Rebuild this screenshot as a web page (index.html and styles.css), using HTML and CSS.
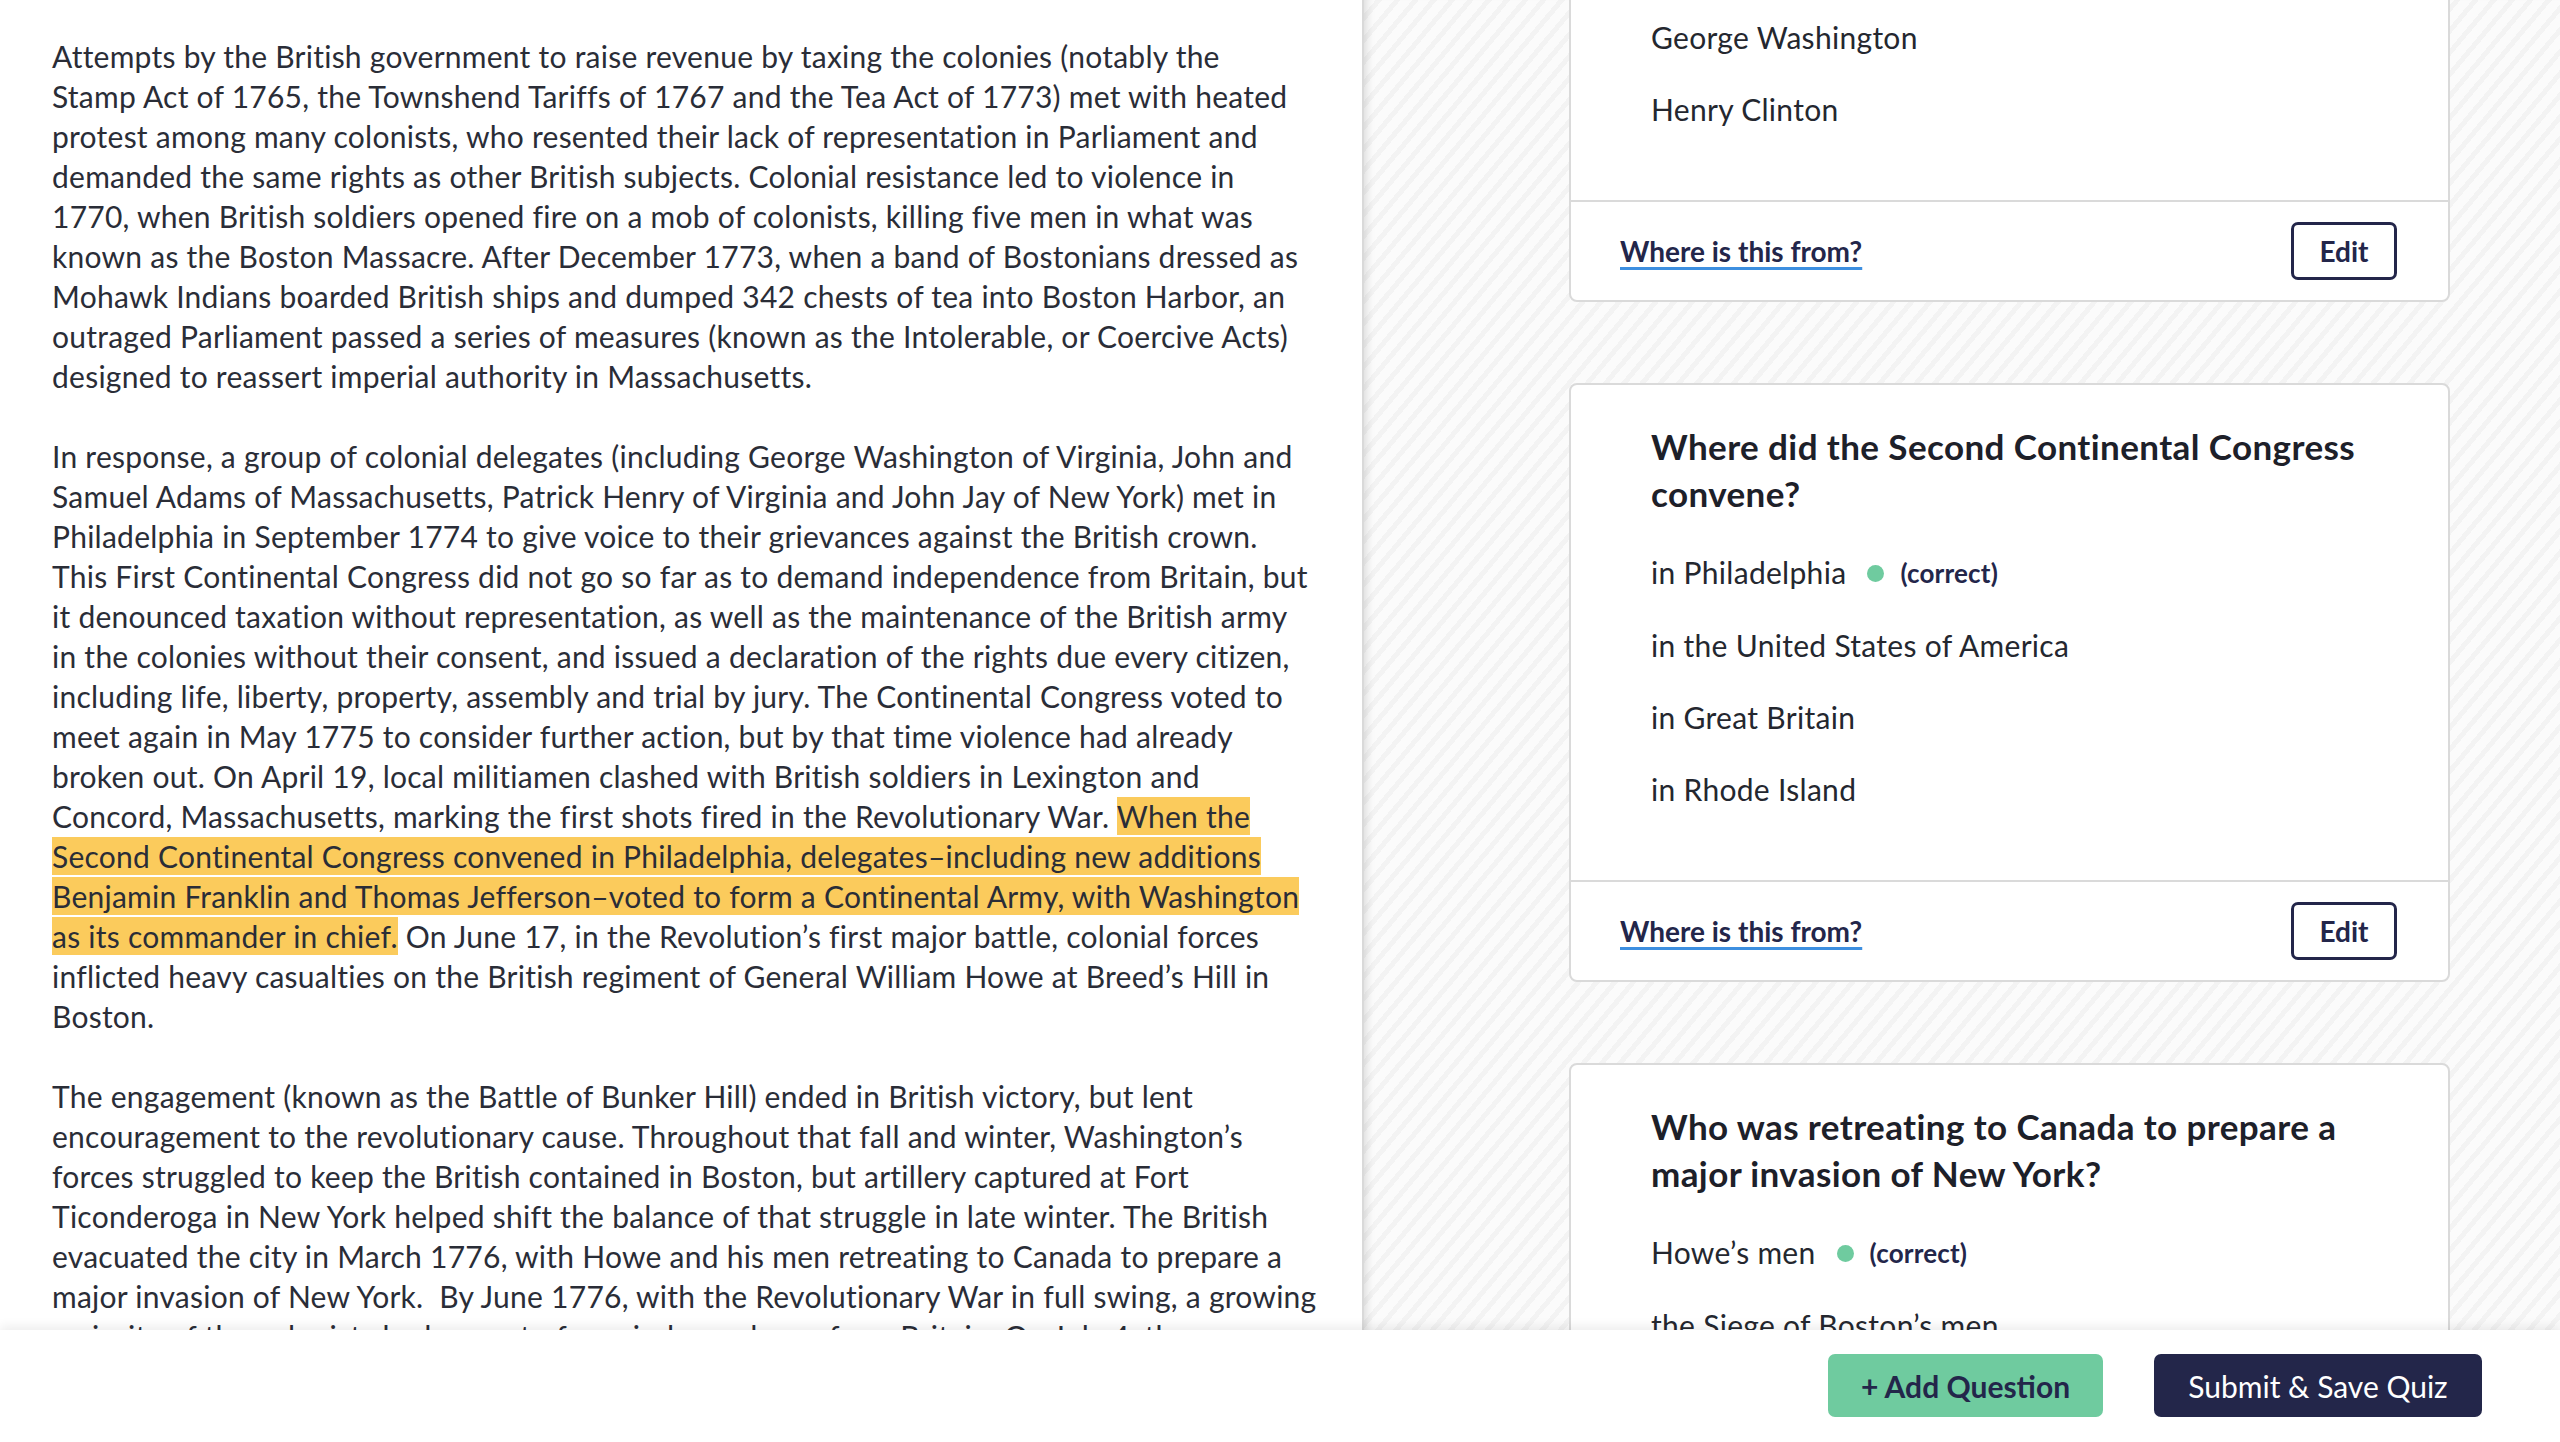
FILE: index.html
```html
<!DOCTYPE html>
<html lang="en">
<head>
<meta charset="utf-8">
<title>Quiz editor</title>
<link rel="stylesheet" href="styles.css">
</head>
<body>
<div class="app">
  <main class="workspace">
    <section class="reading">
      <p class="para">Attempts by the British government to raise revenue by taxing the colonies (notably the<br>Stamp Act of 1765, the Townshend Tariffs of 1767 and the Tea Act of 1773) met with heated<br>protest among many colonists, who resented their lack of representation in Parliament and<br>demanded the same rights as other British subjects. Colonial resistance led to violence in<br>1770, when British soldiers opened fire on a mob of colonists, killing five men in what was<br>known as the Boston Massacre. After December 1773, when a band of Bostonians dressed as<br>Mohawk Indians boarded British ships and dumped 342 chests of tea into Boston Harbor, an<br>outraged Parliament passed a series of measures (known as the Intolerable, or Coercive Acts)<br>designed to reassert imperial authority in Massachusetts.</p>
      <p class="para">In response, a group of colonial delegates (including George Washington of Virginia, John and<br>Samuel Adams of Massachusetts, Patrick Henry of Virginia and John Jay of New York) met in<br>Philadelphia in September 1774 to give voice to their grievances against the British crown.<br>This First Continental Congress did not go so far as to demand independence from Britain, but<br>it denounced taxation without representation, as well as the maintenance of the British army<br>in the colonies without their consent, and issued a declaration of the rights due every citizen,<br>including life, liberty, property, assembly and trial by jury. The Continental Congress voted to<br>meet again in May 1775 to consider further action, but by that time violence had already<br>broken out. On April 19, local militiamen clashed with British soldiers in Lexington and<br>Concord, Massachusetts, marking the first shots fired in the Revolutionary War. <mark class="hl">When the</mark><br><mark class="hl">Second Continental Congress convened in Philadelphia, delegates–including new additions</mark><br><mark class="hl">Benjamin Franklin and Thomas Jefferson–voted to form a Continental Army, with Washington</mark><br><mark class="hl">as its commander in chief.</mark> On June 17, in the Revolution’s first major battle, colonial forces<br>inflicted heavy casualties on the British regiment of General William Howe at Breed’s Hill in<br>Boston.</p>
      <p class="para">The engagement (known as the Battle of Bunker Hill) ended in British victory, but lent<br>encouragement to the revolutionary cause. Throughout that fall and winter, Washington’s<br>forces struggled to keep the British contained in Boston, but artillery captured at Fort<br>Ticonderoga in New York helped shift the balance of that struggle in late winter. The British<br>evacuated the city in March 1776, with Howe and his men retreating to Canada to prepare a<br>major invasion of New York.&nbsp; By June 1776, with the Revolutionary War in full swing, a growing<br>majority of the colonists had come to favor independence from Britain. On July 4, the</p>
    </section>

    <section class="quiz">
      <article class="card card-scrolled">
        <div class="card-body">
          <ul class="answers">
            <li class="answer">George Washington</li>
            <li class="answer">Henry Clinton</li>
          </ul>
        </div>
        <div class="card-footer">
          <a class="source-link" href="#">Where is this from?</a>
          <button class="edit-btn" type="button">Edit</button>
        </div>
      </article>

      <article class="card">
        <div class="card-body">
          <h2 class="q-title">Where did the Second Continental Congress<br>convene?</h2>
          <ul class="answers">
            <li class="answer">in Philadelphia<span class="dot"></span><span class="correct">(correct)</span></li>
            <li class="answer">in the United States of America</li>
            <li class="answer">in Great Britain</li>
            <li class="answer">in Rhode Island</li>
          </ul>
        </div>
        <div class="card-footer">
          <a class="source-link" href="#">Where is this from?</a>
          <button class="edit-btn" type="button">Edit</button>
        </div>
      </article>

      <article class="card">
        <div class="card-body">
          <h2 class="q-title">Who was retreating to Canada to prepare a<br>major invasion of New York?</h2>
          <ul class="answers">
            <li class="answer">Howe’s men<span class="dot"></span><span class="correct">(correct)</span></li>
            <li class="answer">the Siege of Boston’s men</li>
          </ul>
        </div>
      </article>
    </section>
  </main>

  <footer class="actions">
    <button class="btn btn-add" type="button">+ Add Question</button>
    <button class="btn btn-submit" type="button">Submit &amp; Save Quiz</button>
  </footer>
</div>
</body>
</html>
```

FILE: styles.css
```css
* { box-sizing: border-box; }

html, body {
  margin: 0;
  padding: 0;
  background: #ffffff;
}

body {
  font-family: "Lato", "Liberation Sans", sans-serif;
  color: #2b2e38;
}

.app {
  height: 1442px;
  display: grid;
  grid-template-rows: 1330px 112px;
  overflow: hidden;
}

.workspace {
  display: grid;
  grid-template-columns: 1364px 1fr;
  overflow: hidden;
  min-height: 0;
}

/* ---------- reading passage ---------- */
.reading {
  border-right: 2px solid #d9d9d9;
  padding: 36px 20px 0 52px;
  overflow: hidden;
  font-size: 30px;
  letter-spacing: 0.25px;
  line-height: 40px;
  color: #2a2d37;
}

.para {
  margin: 0 0 40px;
  white-space: nowrap;
}

.hl {
  background: #fbcb5c;
  color: inherit;
  padding: 1px 0;
}

/* ---------- quiz column ---------- */
.quiz {
  overflow: hidden;
  min-height: 0;
  padding-left: 205px;
  display: flex;
  flex-direction: column;
  gap: 81px;
  background-color: #fbfbfb;
  background-image: repeating-linear-gradient(130deg, #fbfbfb 0 9px, #f3f3f3 9px 14px);
  box-shadow: inset 10px 0 10px -8px rgba(0, 0, 0, 0.14);
}

.card {
  flex-shrink: 0;
  width: 881px;
  background: #ffffff;
  border: 2px solid #dadada;
  border-radius: 8px;
}

.card-scrolled {
  margin-top: -23px;
}

.card-body {
  padding: 38px 80px 71px 80px;
}

.q-title {
  margin: 0 0 33px;
  font-size: 35px;
  letter-spacing: 0.4px;
  line-height: 47px;
  font-weight: 700;
  color: #1d2029;
}

.answers {
  list-style: none;
  margin: 0;
  padding: 0;
  display: flex;
  flex-direction: column;
  gap: 32px;
}

.answer {
  font-size: 30px;
  letter-spacing: 0.3px;
  line-height: 40px;
  color: #24272f;
  display: flex;
  align-items: center;
}

.dot {
  flex-shrink: 0;
  width: 17px;
  height: 17px;
  border-radius: 50%;
  background: #6fcb9f;
  margin: 3px 16px 0 21px;
}

.correct {
  font-size: 26px;
  letter-spacing: 0.2px;
  font-weight: 700;
  color: #23264a;
  margin-top: 3px;
}

.card-footer {
  border-top: 2px solid #dadada;
  padding: 20px 51px 20px 49px;
  display: flex;
  justify-content: space-between;
  align-items: center;
}

.source-link {
  font-size: 28px;
  font-weight: 700;
  color: #23264a;
  text-decoration: underline;
  text-decoration-color: #3d8fe0;
  text-decoration-thickness: 3px;
  text-underline-offset: 5px;
}

.edit-btn {
  width: 106px;
  height: 58px;
  border: 3px solid #23264a;
  border-radius: 7px;
  background: #ffffff;
  font-family: inherit;
  font-size: 28px;
  font-weight: 700;
  color: #23264a;
  padding: 0;
}

/* ---------- bottom actions ---------- */
.actions {
  position: relative;
  z-index: 1;
  background: #ffffff;
  box-shadow: 0 -4px 10px rgba(0, 0, 0, 0.07);
  display: flex;
  justify-content: flex-end;
  align-items: flex-start;
  gap: 51px;
  padding: 24px 78px 0 0;
}

.btn {
  height: 63px;
  border: none;
  border-radius: 7px;
  font-family: inherit;
  font-size: 30px;
  padding: 0 24px;
}

.btn-add {
  width: 275px;
  background: #6fcb9f;
  color: #23264a;
  font-weight: 700;
}

.btn-submit {
  width: 328px;
  background: #23264a;
  color: #ffffff;
  font-weight: 400;
}
```
